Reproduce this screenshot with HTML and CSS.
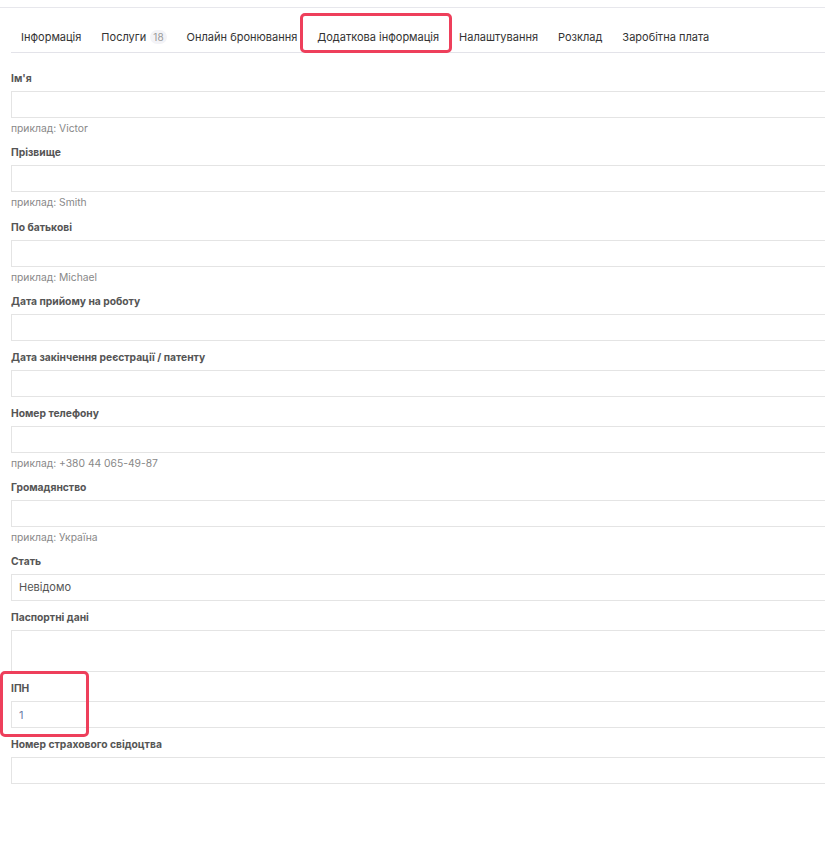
FILE: index.html
```html
<!DOCTYPE html>
<html lang="uk">
<head>
  <meta charset="UTF-8">
  <title>Додаткова інформація</title>
  <link rel="stylesheet" href="styles.css">
</head>
<body>

<div class="topbar"></div>

<div class="tabs">
  <div class="tab">Інформація</div>
  <div class="tab">Послуги <span class="badge">18</span></div>
  <div class="tab">Онлайн бронювання</div>
  <div class="tab active">Додаткова інформація</div>
  <div class="tab">Налаштування</div>
  <div class="tab">Розклад</div>
  <div class="tab">Заробітна плата</div>
</div>

<form class="form">
  <div class="field">
    <label>Ім'я</label>
    <input type="text">
    <div class="hint">приклад: Victor</div>
  </div>
  <div class="field">
    <label>Прізвище</label>
    <input type="text">
    <div class="hint">приклад: Smith</div>
  </div>
  <div class="field">
    <label>По батькові</label>
    <input type="text">
    <div class="hint">приклад: Michael</div>
  </div>
  <div class="field">
    <label>Дата прийому на роботу</label>
    <input type="text">
  </div>
  <div class="field">
    <label>Дата закінчення реєстрації / патенту</label>
    <input type="text">
  </div>
  <div class="field">
    <label>Номер телефону</label>
    <input type="text">
    <div class="hint">приклад: +380 44 065-49-87</div>
  </div>
  <div class="field">
    <label>Громадянство</label>
    <input type="text">
    <div class="hint">приклад: Україна</div>
  </div>
  <div class="field">
    <label>Стать</label>
    <div class="select">Невідомо</div>
  </div>
  <div class="field">
    <label>Паспортні дані</label>
    <textarea></textarea>
  </div>
  <div class="field marked">
    <label>ІПН</label>
    <input type="text" value="1">
  </div>
  <div class="field">
    <label>Номер страхового свідоцтва</label>
    <input type="text">
  </div>
</form>

</body>
</html>
```

FILE: styles.css
```css
html, body {
  overflow-x: hidden;
}
body {
  font-family: Inter, "Noto Sans", sans-serif;
  background-color: #fff;
  color: #333;
  margin: 0;
  padding: 0;
}
.topbar {
  height: 7px;
  border-bottom: 1px solid #e7e7ec;
}
.tabs {
  display: flex;
  margin-left: 11px;
  border-bottom: 1px solid #e3e3e9;
}
.tab {
  position: relative;
  padding: 21px 10px 7px;
  font-size: 11px;
  line-height: 16px;
  color: #333;
  white-space: nowrap;
}
.tab.active::after {
  content: "";
  position: absolute;
  left: -7px;
  right: -3px;
  top: 5px;
  bottom: -1px;
  border: 3px solid #ee3f5b;
  border-radius: 5px;
}
.badge {
  display: inline-block;
  margin-left: 1px;
  padding: 0 3px;
  font-size: 10px;
  line-height: 14px;
  color: #999;
  background-color: #f3f3f7;
  border-radius: 7px;
}
.form {
  margin: 0 -20px 0 11px;
  padding-top: 18px;
}
.field {
  position: relative;
  margin-bottom: 9px;
}
.field label {
  display: block;
  font-size: 10.3px;
  font-weight: 700;
  line-height: 14px;
  color: #555;
  margin-bottom: 6px;
}
.field input,
.field textarea,
.select {
  display: block;
  box-sizing: border-box;
  width: 100%;
  height: 27px;
  margin: 0;
  padding: 0 7px;
  border: 1px solid #e4e4e4;
  border-radius: 0;
  font-family: inherit;
  font-size: 11px;
  color: #6b7ea6;
  background: #fff;
  outline: none;
}
.field textarea {
  height: 42px;
  resize: none;
}
.select {
  line-height: 25px;
  color: #555;
}
.hint {
  margin-top: 3px;
  font-size: 10.3px;
  line-height: 15.3px;
  color: #888;
}
.field.marked::after {
  content: "";
  position: absolute;
  left: -11px;
  top: -10px;
  width: 83px;
  height: 60px;
  border: 3px solid #ee3f5b;
  border-radius: 5px;
}
```
